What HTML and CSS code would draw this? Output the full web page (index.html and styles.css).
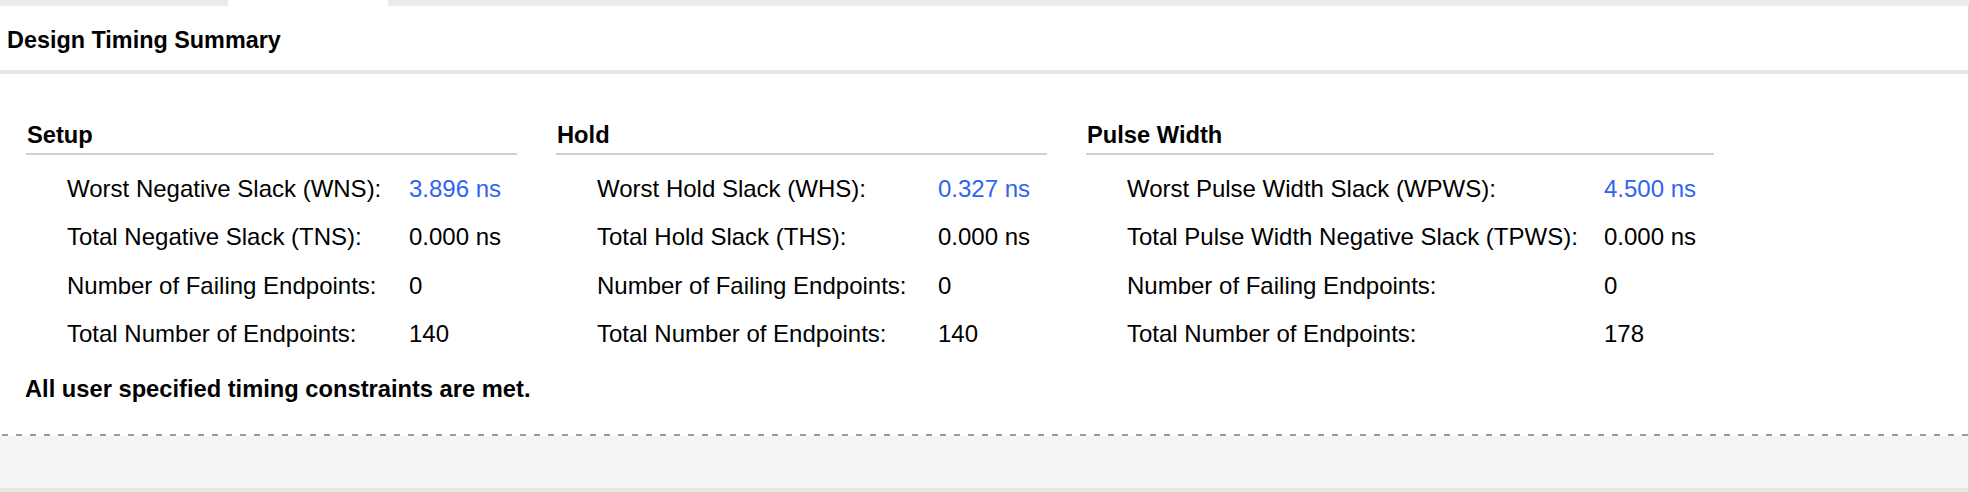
FILE: index.html
```html
<!DOCTYPE html>
<html>
<head>
<meta charset="utf-8">
<title>Design Timing Summary</title>
<link rel="stylesheet" href="styles.css">
</head>
<body>
<div class="tabstrip">
  <div class="tab-gap"></div>
  <div class="tab-active"></div>
</div>
<div class="panel">
  <div class="title">Design Timing Summary</div>
  <div class="title-sep"></div>
  <div class="content">
    <div class="sections">
      <div class="section setup">
        <div class="sec-head">Setup</div>
        <div class="rows">
          <span>Worst Negative Slack (WNS):</span><span class="val link">3.896 ns</span>
          <span>Total Negative Slack (TNS):</span><span class="val">0.000 ns</span>
          <span>Number of Failing Endpoints:</span><span class="val">0</span>
          <span>Total Number of Endpoints:</span><span class="val">140</span>
        </div>
      </div>
      <div class="section hold">
        <div class="sec-head">Hold</div>
        <div class="rows">
          <span>Worst Hold Slack (WHS):</span><span class="val link">0.327 ns</span>
          <span>Total Hold Slack (THS):</span><span class="val">0.000 ns</span>
          <span>Number of Failing Endpoints:</span><span class="val">0</span>
          <span>Total Number of Endpoints:</span><span class="val">140</span>
        </div>
      </div>
      <div class="section pulse">
        <div class="sec-head">Pulse Width</div>
        <div class="rows">
          <span>Worst Pulse Width Slack (WPWS):</span><span class="val link">4.500 ns</span>
          <span>Total Pulse Width Negative Slack (TPWS):</span><span class="val">0.000 ns</span>
          <span>Number of Failing Endpoints:</span><span class="val">0</span>
          <span>Total Number of Endpoints:</span><span class="val">178</span>
        </div>
      </div>
    </div>
    <div class="summary">All user specified timing constraints are met.</div>
  </div>
  <div class="dots"></div>
  <div class="footer"></div>
  <div class="bottom-strip"></div>
</div>
</body>
</html>
```

FILE: styles.css
```css
html, body {
  margin: 0;
  padding: 0;
}
body {
  width: 1969px;
  height: 492px;
  overflow: hidden;
  background: #ffffff;
  font-family: "Liberation Sans", Arial, sans-serif;
  color: #000000;
}
.tabstrip {
  height: 6px;
  background: #ebebeb;
  display: flex;
}
.tab-gap {
  width: 228px;
}
.tab-active {
  width: 160px;
  background: #ffffff;
}
.panel {
  height: 486px;
  border-right: 1px solid #d6d6d6;
  display: flex;
  flex-direction: column;
}
.title {
  height: 64px;
  box-sizing: border-box;
  padding-left: 7px;
  padding-top: 4px;
  display: flex;
  align-items: center;
  font-weight: bold;
  font-size: 23.4px;
}
.title-sep {
  height: 4px;
  background: #e6e6e6;
}
.content {
  height: 360px;
  box-sizing: border-box;
  padding-top: 47px;
  padding-left: 25px;
}
.sections {
  display: flex;
  gap: 39px;
  margin-left: 1px;
}
.section.setup,
.section.hold {
  width: 491px;
}
.section.pulse {
  width: 628px;
}
.sec-head {
  font-weight: bold;
  font-size: 23.7px;
  line-height: 28px;
  padding-left: 1px;
  padding-bottom: 4px;
  border-bottom: 2px solid #cfcfcf;
}
.rows {
  display: grid;
  margin-top: 10px;
  padding-left: 41px;
  font-size: 24px;
  line-height: 48.33px;
  white-space: nowrap;
}
.setup .rows {
  grid-template-columns: 342px auto;
}
.hold .rows {
  grid-template-columns: 341px auto;
}
.pulse .rows {
  grid-template-columns: 477px auto;
}
.val.link {
  color: #2f63f4;
}
.summary {
  margin-top: 17px;
  font-weight: bold;
  font-size: 23.7px;
  line-height: 28px;
}
.dots {
  height: 2px;
  background-image: linear-gradient(to right, #9a9a9a 6px, transparent 6px);
  background-size: 14px 2px;
  background-position: 2px 0;
  background-repeat: repeat-x;
}
.footer {
  height: 52px;
  background: #f5f5f5;
}
.bottom-strip {
  height: 4px;
  background: #e6e6e6;
}
```
